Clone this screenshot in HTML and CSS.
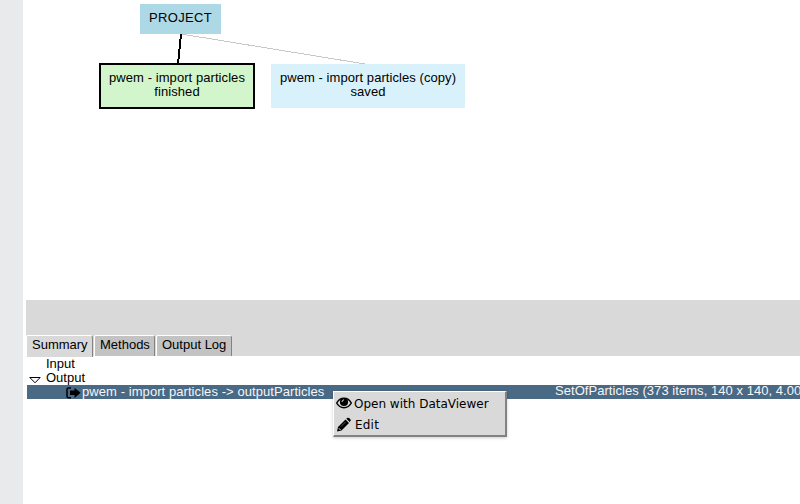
FILE: index.html
```html
<!DOCTYPE html>
<html lang="en">
<head>
<meta charset="utf-8">
<title>Project</title>
<link rel="stylesheet" href="styles.css">
</head>
<body>
<div class="app">
  <aside class="rail"></aside>
  <main class="main">
    <section class="canvas">
      <svg class="edges" width="777" height="300" viewBox="23 0 777 300" shape-rendering="crispEdges">
        <path d="M181 34L365 64" stroke="#c8c8c8" fill="none"/>
        <path d="M181 34L178 64" stroke="#000" stroke-width="2" fill="none"/>
      </svg>
      <div class="node project">PROJECT</div>
      <div class="node finished"><span>pwem - import particles</span><span>finished</span></div>
      <div class="node saved"><span>pwem - import particles (copy)</span><span>saved</span></div>
    </section>
    <section class="panel">
      <nav class="tabs">
        <div class="tab active"><span>Summary</span></div>
        <div class="tab methods"><span>Methods</span></div>
        <div class="tab log"><span>Output Log</span></div>
      </nav>
      <div class="tree">
        <div class="row">Input</div>
        <div class="row"><svg class="arrow" width="12" height="7" viewBox="0 0 12 7"><path d="M.8.5H11.2L6 5.8Z" fill="#fff" stroke="#000"/></svg>Output</div>
        <div class="row selected">
          <svg class="export" width="15" height="12" viewBox="0 0 15 12"><path d="M5 1H2.5Q1 1 1 2.5V9Q1 10.8 2.5 10.8H5" fill="none" stroke="#000" stroke-width="1.5"/><path d="M4 3.5H8.5V.7L14.5 5.8L8.5 11V8H4Z"/></svg>
          <span class="name">pwem - import particles -&gt; outputParticles</span>
          <span class="info">SetOfParticles (373 items, 140 x 140, 4.00</span>
        </div>
      </div>
    </section>
  </main>
  <div class="menu">
    <div class="item"><svg class="eye" width="16" height="12" viewBox="0 0 16 12"><path d="M.7 6C4-.4 12-.4 15.3 6C12 12.2 4 12.2.7 6Z" fill="#d9d9d9" stroke="#000" stroke-width="1.5"/><circle cx="8" cy="5" r="4.1"/><path d="M6 5Q6 3 8 2.8" stroke="#d9d9d9" fill="none"/></svg><span class="open">Open with DataViewer</span></div>
    <div class="item"><svg width="16" height="16" viewBox="0 0 16 16"><path d="M1 14.5L2 10L9.5 2.5L13 6L5.5 13.5Z"/><path d="M10.3 1.7L11.5.8Q12.5.3 13.5 1.3L14.4 2.2Q15.2 3.2 14.4 4L13.7 5Z"/><path d="M2.8 11.2L4.6 13" stroke="#d9d9d9" fill="none"/><path d="M5 9.5L9.5 5" stroke="#777" stroke-width=".7" fill="none"/></svg><span class="edit">Edit</span></div>
  </div>
</div>
</body>
</html>
```
FILE: styles.css
```css
* { box-sizing: border-box; }
body { margin: 0; background: #fff; color: #000; font: 13px/14px "Liberation Sans", Arial, sans-serif; }
.app { display: flex; width: 800px; height: 504px; overflow: hidden; position: relative; }
.rail { flex: none; width: 23px; background: #e9eaec; }
.main { flex: 1; min-width: 0; display: flex; flex-direction: column; }
.canvas { position: relative; height: 300px; flex: none; }
.edges { display: block; }
.node { position: absolute; display: flex; flex-direction: column; align-items: center; justify-content: center; white-space: nowrap; letter-spacing: .07px; }
.project { left: 117px; top: 4px; width: 81px; height: 30px; padding-bottom: 2px; background: #add8e6; letter-spacing: .35px; }
.finished { left: 76px; top: 63px; width: 156px; height: 46px; padding-bottom: 2px; background: #d2f5cb; border: 2px solid #000; }
.saved { left: 248px; top: 64px; width: 194px; height: 44px; padding-bottom: 2px; background: #d9f1fa; }
.panel { margin-left: 3px; }
.tabs { height: 56px; padding-top: 35px; background: #d9d9d9; display: flex; align-items: stretch; }
.tab { background: #c3c3c3; border-top: 1px solid #fff; border-left: 1px solid #fff; border-right: 1px solid #828282; border-radius: 2px 3px 0 0; padding: 2px 0 0 5px; white-space: nowrap; margin-right: 1px; width: 61px; }
.tab.active { width: 67px; background: #d9d9d9; margin-bottom: -1px; }
.tab.log { width: 76px; }
.tree { padding: 1px 0 0 1px; }
.row { height: 14px; padding-left: 19px; display: flex; position: relative; white-space: nowrap; }
.arrow { position: absolute; left: 2px; top: 6px; }
.selected { background: #4a6984; color: #f4f6f8; padding-left: 38px; line-height: 14px; }
.export { flex: none; margin: 2px 1px 0 1px; }
.name { width: 473px; flex: none; letter-spacing: .07px; }
.info { line-height: 12px; letter-spacing: .05px; }
.menu { position: absolute; left: 333px; top: 391px; width: 174px; height: 46px; background: #d9d9d9; border: 1px solid #fff; border-right: 2px solid #828282; border-bottom: 2px solid #828282; padding: 1px 2px; font: 12px/21px "DejaVu Sans", sans-serif; box-shadow: 0 1px 3px rgba(0,0,0,.2); }
.item { display: flex; align-items: center; height: 21px; white-space: nowrap; }
.item span { margin-left: 2px; padding-top: 2px; }
.eye { margin-bottom: 2px; }
.item .edit { margin-left: 3px; letter-spacing: .2px; }
```
